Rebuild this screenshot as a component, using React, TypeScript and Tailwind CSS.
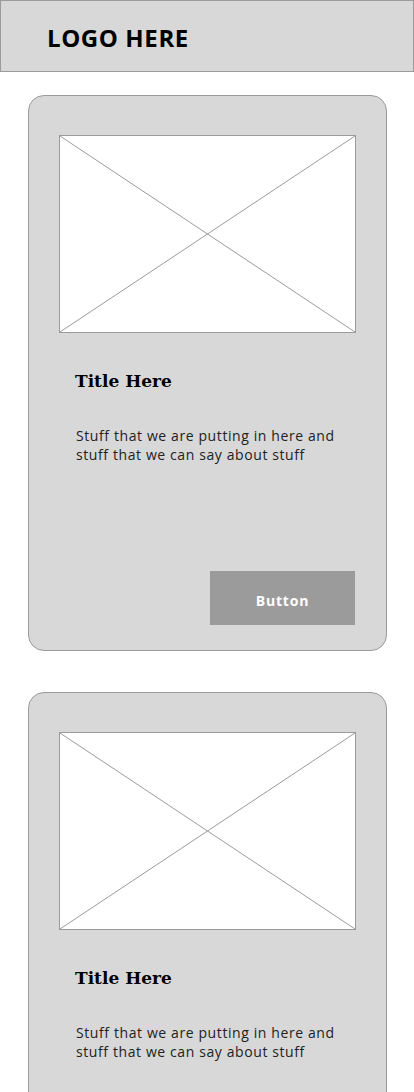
import React from 'react';

const Placeholder: React.FC = () => (
  <div className="relative h-[198px] w-full border border-[#9b9b9b] bg-white">
    <svg className="absolute inset-0 h-full w-full" preserveAspectRatio="none" viewBox="0 0 100 100">
      <line x1="0" y1="0" x2="100" y2="100" stroke="#9b9b9b" strokeWidth="1" vectorEffect="non-scaling-stroke" />
      <line x1="100" y1="0" x2="0" y2="100" stroke="#9b9b9b" strokeWidth="1" vectorEffect="non-scaling-stroke" />
    </svg>
  </div>
);

const Card: React.FC = () => (
  <div className="flex h-[556px] w-[359px] flex-col rounded-2xl border border-[#9b9b9b] bg-[#d8d8d8] px-[30px] pt-[39px] pb-[25px]">
    <Placeholder />
    <h2 className="mt-[36px] pl-4 font-['DejaVu_Serif',serif] text-[17px] font-bold leading-6 text-black tracking-[0px]">
      Title Here
    </h2>
    <p className="mt-[33px] pl-[17px] font-['Open_Sans',sans-serif] text-[14px] leading-[19px] tracking-[0.6px] text-[#222]">
      Stuff that we are putting in here and
      <br />
      stuff that we can say about stuff
    </p>
    <div className="mt-auto mr-[1px] flex justify-end">
      <button className="h-[54px] w-[145px] bg-[#9b9b9b] pt-1 font-['Open_Sans',sans-serif] text-[14px] font-bold tracking-[0.8px] text-white">
        Button
      </button>
    </div>
  </div>
);

export default function App() {
  return (
    <div className="h-[1092px] w-[414px] overflow-hidden bg-white">
      <header className="flex h-[72px] items-center border border-[#9b9b9b] bg-[#d8d8d8] pl-[46px] pt-1">
        <span className="font-['Open_Sans',sans-serif] text-[24px] font-bold tracking-[0.6px] text-black">
          LOGO HERE
        </span>
      </header>
      <main className="flex flex-col gap-[41px] pl-[28px] pt-[23px]">
        <Card />
        <Card />
      </main>
    </div>
  );
}
